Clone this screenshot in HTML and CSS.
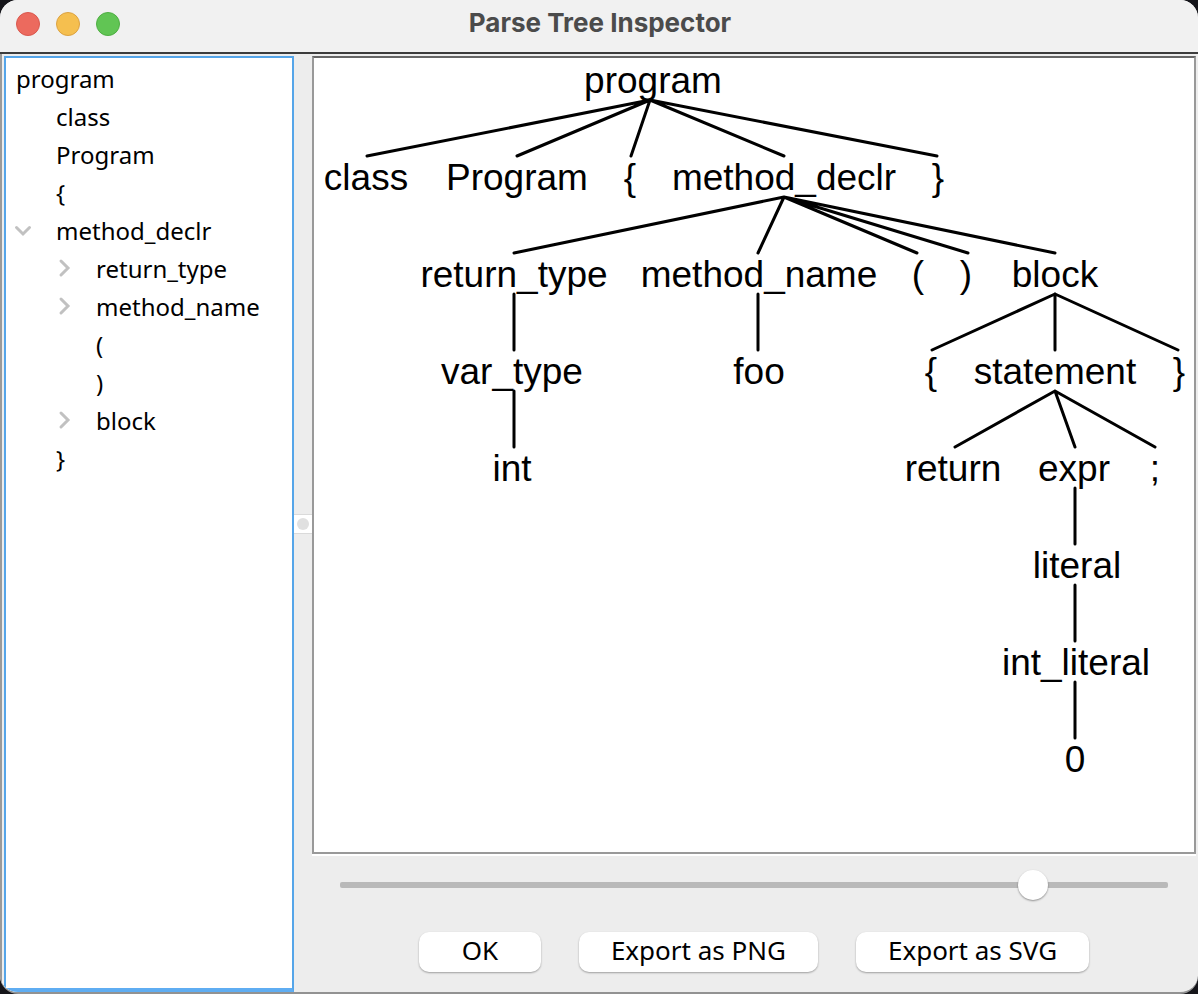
FILE: index.html
```html
<!DOCTYPE html>
<html lang="en">
<head>
<meta charset="utf-8">
<title>Parse Tree Inspector</title>
<link rel="stylesheet" href="styles.css">
</head>
<body>
<div class="window">
  <header class="titlebar">
    <div class="lights">
      <button class="light light-close" type="button" aria-label="Close"></button>
      <button class="light light-minimize" type="button" aria-label="Minimize"></button>
      <button class="light light-zoom" type="button" aria-label="Zoom"></button>
    </div>
    <h1 class="title">Parse Tree Inspector</h1>
  </header>
  <main class="split">
    <nav class="tree" aria-label="Parse tree">
      <div class="row">program</div>
      <ul class="branch">
        <li><div class="row leaf">class</div></li>
        <li><div class="row leaf">Program</div></li>
        <li><div class="row leaf">{</div></li>
        <li>
          <div class="row"><button class="expander" type="button" aria-label="Collapse method_declr" aria-expanded="true"><svg class="chevron" viewBox="0 0 16 16"><path d="M0.500 4.500L7 11L13.500 4.500"/></svg></button>method_declr</div>
          <ul class="branch nested">
            <li><div class="row"><button class="expander" type="button" aria-label="Expand return_type" aria-expanded="false"><svg class="chevron" viewBox="0 0 16 16"><path d="M5 0L12 7L5 14"/></svg></button>return_type</div></li>
            <li><div class="row"><button class="expander" type="button" aria-label="Expand method_name" aria-expanded="false"><svg class="chevron" viewBox="0 0 16 16"><path d="M5 0L12 7L5 14"/></svg></button>method_name</div></li>
            <li><div class="row leaf">(</div></li>
            <li><div class="row leaf">)</div></li>
            <li><div class="row"><button class="expander" type="button" aria-label="Expand block" aria-expanded="false"><svg class="chevron" viewBox="0 0 16 16"><path d="M5 0L12 7L5 14"/></svg></button>block</div></li>
          </ul>
        </li>
        <li><div class="row leaf">}</div></li>
      </ul>
    </nav>
    <div class="divider"><button class="grip" type="button" aria-label="Resize panes"></button></div>
    <section class="viewer">
      <div class="canvas">
        <svg class="diagram" role="img" aria-label="Parse tree diagram">
          <g class="edges">
            <path d="M336 42L53 98M336 42L203 98M336 42L317 98M336 42L470 98M336 42L623 98"/>
            <path d="M470 139L200 195M470 139L444 195M470 139L603 195M470 139L654 195M470 139L741 195"/>
            <path d="M200 236V292M444 236V292M741 236L618 292M741 236V292M741 236L864 292"/>
            <path d="M200 333V389M741 333L641 389M741 333L761 389M741 333L841 389"/>
            <path d="M761 430V486M761 527V583M761 624V680"/>
          </g>
          <g class="labels">
            <text x="339" y="35">program</text>
            <text x="52" y="132">class</text>
            <text x="203" y="132">Program</text>
            <text x="316" y="132">{</text>
            <text x="470" y="132">method_declr</text>
            <text x="624" y="132">}</text>
            <text x="200" y="229">return_type</text>
            <text x="445" y="229">method_name</text>
            <text x="604" y="229">(</text>
            <text x="652" y="229">)</text>
            <text x="741" y="229">block</text>
            <text x="198" y="326">var_type</text>
            <text x="445" y="326">foo</text>
            <text x="617" y="326">{</text>
            <text x="741" y="326">statement</text>
            <text x="865" y="326">}</text>
            <text x="198" y="423">int</text>
            <text x="639" y="423">return</text>
            <text x="760" y="423">expr</text>
            <text x="841" y="423">;</text>
            <text x="763" y="520">literal</text>
            <text x="762" y="617">int_literal</text>
            <text x="761" y="714">0</text>
          </g>
        </svg>
      </div>
      <div class="controls">
        <input class="zoom" type="range" min="0" max="100" value="85" aria-label="Zoom level">
        <div class="actions">
          <button class="action" type="button">OK</button>
          <button class="action" type="button">Export as PNG</button>
          <button class="action" type="button">Export as SVG</button>
        </div>
      </div>
    </section>
  </main>
</div>
</body>
</html>
```

FILE: styles.css
```css
* {
  box-sizing: border-box;
}

body {
  margin: 0;
  background: #15151a;
  color: #000;
  font-family: "Noto Sans", sans-serif;
}

button {
  padding: 0;
  border: 0;
  font: inherit;
  color: inherit;
}

.window {
  display: flex;
  flex-direction: column;
  min-height: 100vh;
  overflow: hidden;
  border-bottom: 2px solid #929292;
  border-radius: 18px;
  background: #ededed;
}

.titlebar {
  display: grid;
  grid-template-columns: 1fr auto 1fr;
  align-items: center;
  height: 54px;
  padding: 0 14px 4px 16px;
  border-bottom: 2px solid #3c3c3c;
  background: #f1f1f1;
}

.lights {
  display: flex;
  gap: 16px;
}

.light {
  width: 24px;
  height: 24px;
  border: 1px solid #d9584e;
  border-radius: 50%;
  background: #ec6a5e;
}

.light-minimize {
  border-color: #dba242;
  background: #f5bf4f;
}

.light-zoom {
  border-color: #4fae43;
  background: #61c554;
}

.title {
  margin: 0;
  padding-bottom: 2px;
  color: #4b4b4b;
  font: 700 26px/32px Inter, sans-serif;
}

.split {
  display: flex;
  flex: 1;
  padding: 2px 2px 0;
  border-left: 2px solid #9a9a9a;
}

.tree {
  width: 290px;
  padding: 2px 10px;
  border: 2px solid #55a5e9;
  border-bottom: 4px solid #5fadf2;
  background: #fff;
  font-size: 24px;
  line-height: 38px;
}

.branch {
  margin: 0;
  padding: 0;
  list-style: none;
}

.nested {
  padding-left: 40px;
}

.row {
  display: flex;
  align-items: center;
  height: 38px;
}

.leaf {
  padding-left: 40px;
}

.expander {
  display: flex;
  width: 40px;
  background: none;
}

.chevron {
  width: 16px;
  height: 16px;
  overflow: visible;
  fill: none;
  stroke: #c1c1c1;
  stroke-width: 3;
  stroke-linecap: round;
}

.divider {
  display: flex;
  align-items: center;
  width: 18px;
}

.grip {
  display: flex;
  align-items: center;
  justify-content: center;
  width: 18px;
  height: 20px;
  border: solid #dadada;
  border-width: 1px 0;
  background: #fff;
}

.grip::before {
  width: 12px;
  height: 12px;
  border-radius: 50%;
  background: #e0e0e0;
  content: "";
}

.viewer {
  display: flex;
  flex: 1;
  flex-direction: column;
  min-width: 0;
}

.canvas {
  display: flex;
  flex: 1;
  border: 2px solid #999;
  border-top-color: #666;
  background: #fff;
  box-shadow: 0 2px #fff;
}

.diagram {
  flex: 1;
  min-width: 0;
}

.edges {
  fill: none;
  stroke: #000;
  stroke-width: 3;
  stroke-linecap: round;
  stroke-linejoin: round;
}

.labels {
  font-family: "Liberation Sans", Arial, sans-serif;
  font-size: 37px;
  text-anchor: middle;
}

.controls {
  display: flex;
  flex-direction: column;
  gap: 32px;
  padding: 16px 28px 20px;
}

.zoom {
  width: 100%;
  height: 30px;
  margin: 0;
  background: none;
  appearance: none;
}

.zoom::-webkit-slider-runnable-track {
  height: 6px;
  border-radius: 2px;
  background: #b9b9b9;
}

.zoom::-webkit-slider-thumb {
  width: 30px;
  height: 30px;
  margin-top: -12px;
  border-radius: 50%;
  background: #fff;
  box-shadow: 0 1px 2px #0006;
  appearance: none;
}

.actions {
  display: flex;
  flex-wrap: wrap;
  justify-content: center;
  gap: 38px;
}

.action {
  min-width: 122px;
  height: 40px;
  padding: 0 32px 4px;
  border-radius: 10px;
  background: #fff;
  box-shadow: 0 1px 2px #0005;
  font-size: 26px;
  line-height: 36px;
}
```
